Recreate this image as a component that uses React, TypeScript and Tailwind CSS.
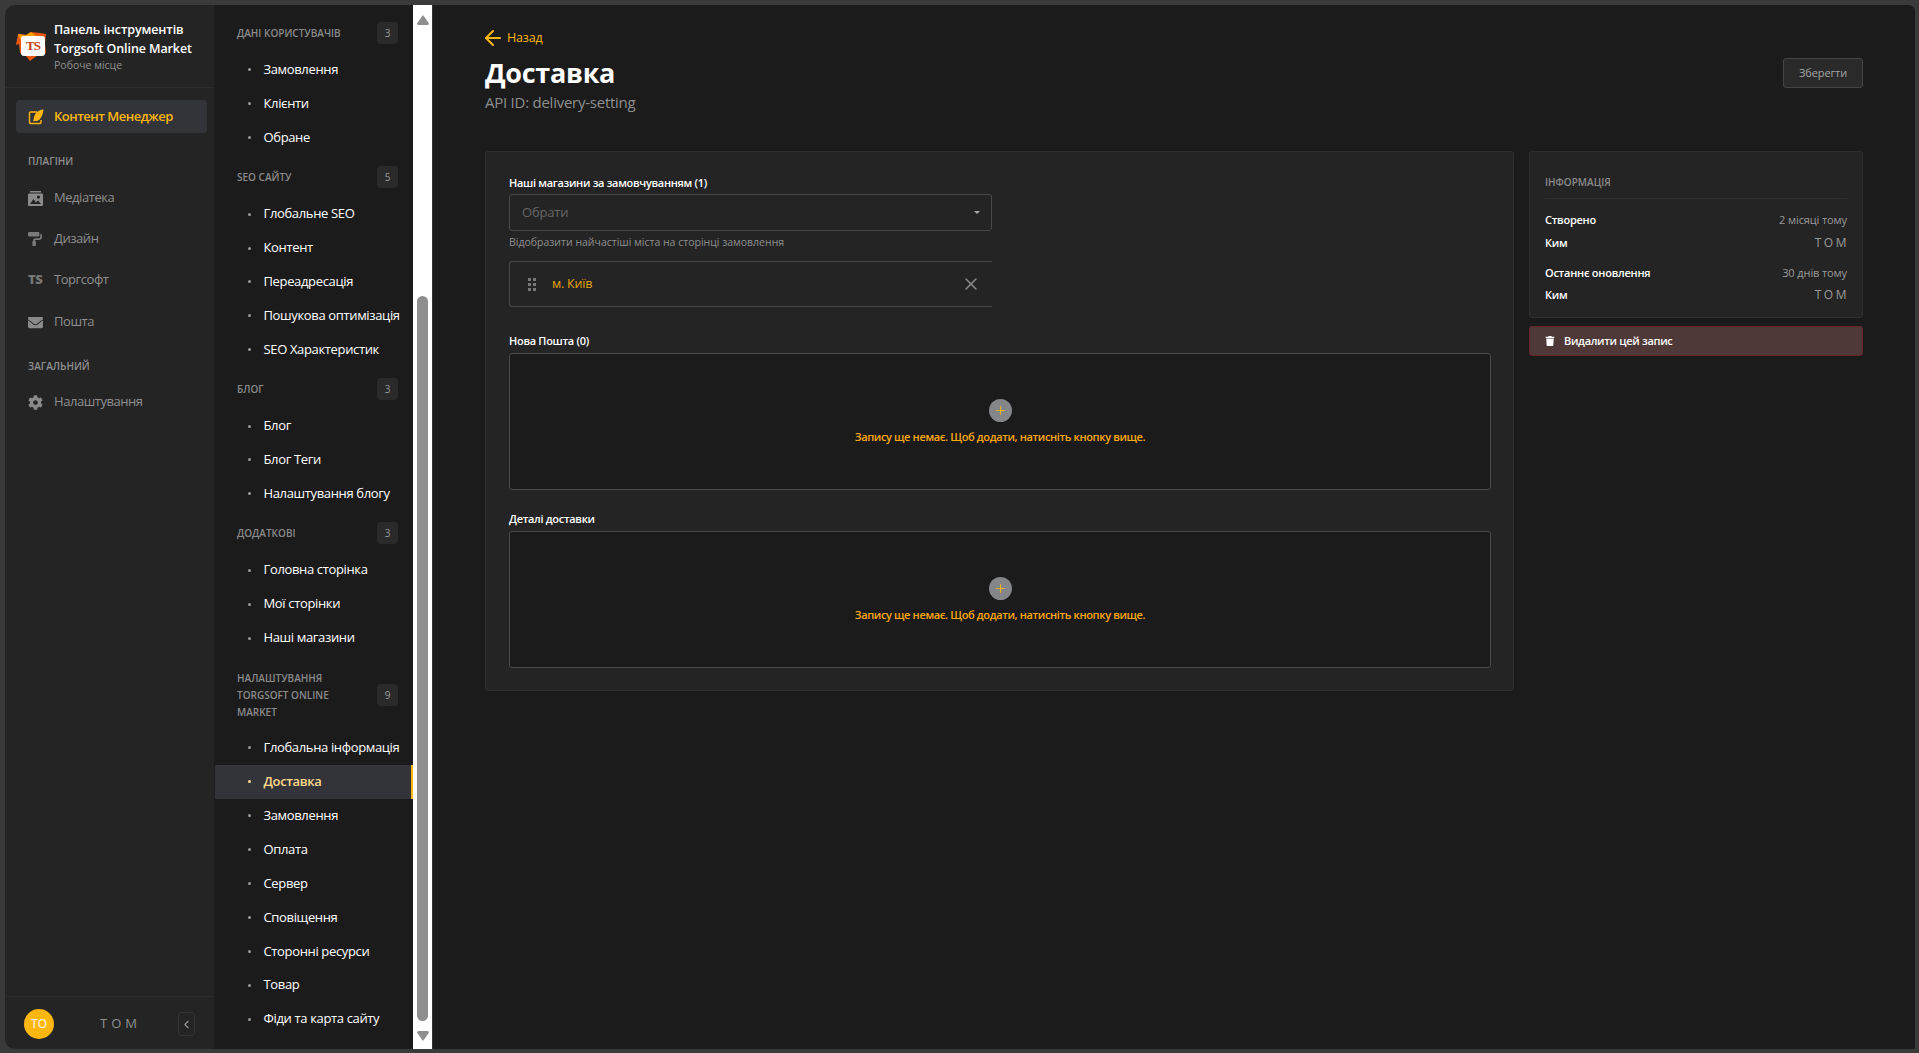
import { ArrowLeft, ChevronLeft, Plus, X } from "lucide-react";
import { FaCog, FaEnvelope, FaPaintRoller, FaTrash } from "react-icons/fa";

const font = "font-['Open_Sans',sans-serif]";

const groups = [
  { title: ["Дані користувачів"], count: 3, items: ["Замовлення", "Клієнти", "Обране"] },
  { title: ["SEO сайту"], count: 5, items: ["Глобальне SEO", "Контент", "Переадресація", "Пошукова оптимізація", "SEO Характеристик"] },
  { title: ["Блог"], count: 3, items: ["Блог", "Блог Теги", "Налаштування блогу"] },
  { title: ["Додаткові"], count: 3, items: ["Головна сторінка", "Мої сторінки", "Наші магазини"] },
  {
    title: ["Налаштування", "Torgsoft Online", "Market"],
    count: 9,
    items: ["Глобальна інформація", "Доставка", "Замовлення", "Оплата", "Сервер", "Сповіщення", "Сторонні ресурси", "Товар", "Фіди та карта сайту"],
  },
];

function Logo() {
  return (
    <div className="relative h-[30px] w-[31px] shrink-0">
      <svg viewBox="0 0 31 30" className="h-full w-full">
        <polygon points="2,3 10,4 15,1 24,2 30,3 29,12 30,22 22,24 14,30 10,25 4,22 3,13 0,14" fill="#e8590c" />
        <polygon points="2,3 10,4 15,1 20,5 6,12" fill="#f59f00" />
      </svg>
      <div className="absolute left-[5px] top-[5px] flex h-[20px] w-[24px] items-center justify-center rounded-[3px] bg-white font-['Liberation_Serif',serif] text-[13px] font-bold tracking-[-1px] text-[#c2410c]">
        TS
      </div>
    </div>
  );
}

function PenBox() {
  return (
    <svg viewBox="0 0 16 16" className="h-[16px] w-[16px]">
      <path d="M9 3H2.5A1 1 0 0 0 1.5 4v9.5a1 1 0 0 0 1 1H12a1 1 0 0 0 1-1V11" fill="none" stroke="#ffb70f" strokeWidth="1.4" />
      <path d="M15.5 .5C10 1 6.5 4 5.5 10.5L5 12.5l1-.5h3.5C13 10 15 6 15.5 .5Z" fill="#ffb70f" />
    </svg>
  );
}

function MediaIcon() {
  return (
    <svg viewBox="0 0 15 15" className="h-[15px] w-[15px]" fill="#8a8a8a">
      <path d="M2 0h11v1.5H2z" />
      <path fillRule="evenodd" d="M1 2.5h13a1 1 0 0 1 1 1V14a1 1 0 0 1-1 1H1a1 1 0 0 1-1-1V3.5a1 1 0 0 1 1-1Zm9.5 2a1.6 1.6 0 1 0 0 3.2 1.6 1.6 0 0 0 0-3.2ZM2 13h11l-3-3.5-2 2-2.5-3.5Z" />
    </svg>
  );
}

function NavRow({ icon, label, className }: { icon: React.ReactNode; label: string; className: string }) {
  return (
    <div className={`flex items-center ${className}`}>
      <span className="flex w-[26px] shrink-0 justify-start">{icon}</span>
      <span className="text-[13px] tracking-[-0.45px] text-[#8f8f8f]">{label}</span>
    </div>
  );
}

function Sidebar() {
  return (
    <aside className="flex w-[210px] shrink-0 flex-col rounded-l-[10px] border-r border-[#1d1d1d] bg-[#242424]">
      <div className="flex h-[83px] shrink-0 gap-[7px] border-b border-[#2d2d2d] pl-[11px] pt-[15px]">
        <div className="pt-[11px]">
          <Logo />
        </div>
        <div className="pt-[1px]">
          <div className="text-[12.5px] font-semibold leading-[18.5px] tracking-[-0.1px] text-white">Панель інструментів</div>
          <div className="text-[12.5px] font-semibold leading-[18.5px] tracking-[-0.1px] text-white">Torgsoft Online Market</div>
          <div className="text-[10.5px] leading-[15px] text-[#8f8f8f]">Робоче місце</div>
        </div>
      </div>
      <div className="ml-[11px] mr-[7px] mt-[12px] flex h-[33px] items-center rounded-[4px] bg-[#33343a] pl-[12px]">
        <span className="w-[26px]">
          <PenBox />
        </span>
        <span className="text-[13px] font-semibold tracking-[-0.5px] text-[#ffb70f]">Контент Менеджер</span>
      </div>
      <div className="ml-[23px] mt-[21px] text-[10px] font-semibold uppercase leading-[14px] text-[#8f8f8f]">Плагіни</div>
      <NavRow className="ml-[23px] mt-[18px] h-[24px]" icon={<MediaIcon />} label="Медіатека" />
      <NavRow className="ml-[23px] mt-[17px] h-[24px]" icon={<FaPaintRoller size={14} color="#7a7a7a" />} label="Дизайн" />
      <NavRow
        className="ml-[23px] mt-[17px] h-[24px]"
        icon={<span className="text-[13px] font-extrabold tracking-[-0.5px] text-[#777]">TS</span>}
        label="Торгсофт"
      />
      <NavRow className="ml-[23px] mt-[18px] h-[24px]" icon={<FaEnvelope size={15} color="#8a8a8a" />} label="Пошта" />
      <div className="ml-[23px] mt-[25px] text-[10px] font-semibold uppercase leading-[14px] text-[#8f8f8f]">Загальний</div>
      <NavRow className="ml-[23px] mt-[17px] h-[24px]" icon={<FaCog size={15} color="#8a8a8a" />} label="Налаштування" />
      <div className="mt-auto flex h-[53px] items-center border-t border-[#2d2d2d] pl-[19px] pt-[2px]">
        <div className="flex h-[30px] w-[30px] items-center justify-center rounded-full bg-[#ffb70f] text-[12px] text-white">TO</div>
        <div className="w-[124px] pl-[9px] text-center text-[13px] tracking-[4px] text-[#8f8f8f]">TOM</div>
        <div className="flex h-[24px] w-[17px] items-center justify-center rounded-[4px] border border-[#333]">
          <ChevronLeft size={13} color="#9a9a9a" />
        </div>
      </div>
    </aside>
  );
}

function SubNav() {
  return (
    <nav className="h-full w-[198px] shrink-0 overflow-hidden bg-[#1b1b1b] pt-[17px]">
      {groups.map((group) => (
        <div key={group.title[0]} className={group.title.length > 1 ? "mb-[11.5px] mt-[15px]" : "mb-[11.5px]"}>
          <div className="flex items-center justify-between pl-[22px] pr-[15px]">
            <div className="w-[120px] text-[10px] font-semibold uppercase leading-[17px] text-[#8a8a8a]">
              {group.title.map((line) => (
                <div key={line} className="whitespace-nowrap">{line}</div>
              ))}
            </div>
            <span className="flex h-[22px] w-[21px] items-center justify-center rounded-[4px] bg-[#2a2a2a] text-[10px] text-[#9a9a9a]">
              {group.count}
            </span>
          </div>
          <ul className={group.title.length > 1 ? "mt-[10px]" : "mt-[9px]"}>
            {group.items.map((item) => {
              const active = group.count === 9 && item === "Доставка";
              return (
                <li
                  key={item}
                  className={`flex h-[33.9px] items-center whitespace-nowrap pl-[33px] ${active ? "border-r-2 border-[#ffb70f] bg-[#33343a]" : ""}`}
                >
                  <span className={`mr-[12.5px] h-[3px] w-[3px] rounded-full ${active ? "bg-[#ffd98a]" : "bg-[#9a9a9a]"}`} />
                  <span className={`text-[13px] tracking-[-0.35px] ${active ? "font-semibold text-[#ffd98a]" : "text-white"}`}>{item}</span>
                </li>
              );
            })}
          </ul>
        </div>
      ))}
    </nav>
  );
}

function Scrollbar() {
  return (
    <div className="flex h-full w-[19px] shrink-0 flex-col items-center bg-white pt-[10px]">
      <svg viewBox="0 0 12 10" className="h-[10px] w-[12px]" fill="#8e8e8e">
        <path d="M6 0 12 8.5Q12 10 10.5 10H1.5Q0 10 0 8.5Z" />
      </svg>
      <div className="mt-[271px] h-[725px] w-[11px] rounded-full bg-[#8e8e8e]" />
      <svg viewBox="0 0 12 10" className="mt-[10px] h-[10px] w-[12px]" fill="#8e8e8e">
        <path d="M6 10 12 1.5Q12 0 10.5 0H1.5Q0 0 0 1.5Z" />
      </svg>
    </div>
  );
}

function EmptyBox() {
  return (
    <div className="flex h-[137px] flex-col items-center rounded-[3px] border border-[#4a4a4a] bg-[#1b1b1b] pt-[45px]">
      <div className="flex h-[23px] w-[23px] items-center justify-center rounded-full bg-[#85868a]">
        <Plus size={13} color="#ffb70f" />
      </div>
      <p className="mt-[6px] text-[11px] font-semibold leading-[18px] tracking-[-0.35px] text-[#ffa912]">
        Запису ще немає. Щоб додати, натисніть кнопку вище.
      </p>
    </div>
  );
}

function Label({ children }: { children: React.ReactNode }) {
  return <div className="text-[11px] font-semibold leading-[16px] tracking-[-0.3px] text-white">{children}</div>;
}

function InfoRow({ name, value, spaced }: { name: string; value: string; spaced?: boolean }) {
  return (
    <div className="flex h-[22.5px] items-center justify-between">
      <span className="text-[11px] font-semibold tracking-[-0.25px] text-white">{name}</span>
      <span className={spaced ? "-mr-[2px] text-[12px] tracking-[2.5px] text-[#9a9a9a]" : "text-[11px] tracking-[-0.1px] text-[#9a9a9a]"}>{value}</span>
    </div>
  );
}

function Main() {
  return (
    <main className="h-full min-w-0 flex-1 rounded-tr-[6px] bg-[#1b1b1b] px-[52px] pt-[25px]">
      <div className="-ml-[4px] flex h-[16px] items-center gap-[2px] text-[#ffb70f]">
        <ArrowLeft size={24} strokeWidth={2} className="shrink-0" />
        <span className="text-[12.5px] tracking-[-0.15px] text-[#ffb70f]">Назад</span>
      </div>
      <div className="flex justify-between">
        <div>
          <h1 className="mt-[8px] text-[27px] font-bold leading-[38px] tracking-[-0.3px] text-white">Доставка</h1>
          <p className="text-[15px] leading-[20px] tracking-[-0.25px] text-[#8f8f8f]">API ID: delivery-setting</p>
        </div>
        <button className="mt-[12px] h-[30px] w-[80px] rounded-[3px] border border-[#454545] bg-[#2a2a2a] text-[11px] tracking-[-0.1px] text-[#a5a5a5]">
          Зберегти
        </button>
      </div>
      <div className="mt-[39px] flex items-start gap-[15px]">
        <section className="h-[540px] w-[1029px] shrink-0 rounded-[3px] border border-[#2e2e2e] bg-[#242424] pl-[23px] pr-[22px] pt-[23px]">
          <Label>Наші магазини за замовчуванням (1)</Label>
          <div className="mt-[3px] flex h-[37px] w-[483px] items-center justify-between rounded-[3px] border border-[#484848] pl-[12px] pr-[11px]">
            <span className="text-[13px] tracking-[-0.2px] text-[#666]">Обрати</span>
            <span className="h-0 w-0 border-x-[3px] border-t-[3px] border-x-transparent border-t-[#aaa]" />
          </div>
          <p className="mt-[3px] text-[10.5px] leading-[16px] text-[#8f8f8f]">Відобразити найчастіші міста на сторінці замовлення</p>
          <div className="mt-[11px] flex h-[46px] w-[483px] items-center rounded-l-[3px] border-y border-l border-[#484848] pl-[18px]">
            <div className="grid w-[24px] grid-cols-[3px_3px] gap-[2px]">
              {[0, 1, 2, 3, 4, 5].map((d) => (
                <span key={d} className="h-[3px] w-[3px] bg-[#777]" />
              ))}
            </div>
            <span className="text-[12.5px] font-medium tracking-[-0.2px] text-[#e5a50a]">м. Київ</span>
            <X size={20} color="#8a8a8a" strokeWidth={1.75} className="ml-auto mr-[11px]" />
          </div>
          <div className="mt-[26px]">
            <Label>Нова Пошта (0)</Label>
            <div className="mt-[4px]">
              <EmptyBox />
            </div>
          </div>
          <div className="mt-[21px]">
            <Label>Деталі доставки</Label>
            <div className="mt-[4px]">
              <EmptyBox />
            </div>
          </div>
        </section>
        <div className="w-[334px] shrink-0">
          <section className="h-[167px] rounded-[3px] border border-[#2e2e2e] bg-[#242424] px-[15px] pt-[23px]">
            <div className="border-b border-[#2f2f2f] pb-[8px] text-[10px] font-semibold uppercase leading-[15px] text-[#8a8a8a]">Інформація</div>
            <div className="mt-[10px]">
              <InfoRow name="Створено" value="2 місяці тому" />
              <InfoRow name="Ким" value="TOM" spaced />
              <div className="h-[7.5px]" />
              <InfoRow name="Останнє оновлення" value="30 днів тому" />
              <InfoRow name="Ким" value="TOM" spaced />
            </div>
          </section>
          <button className="mt-[8px] flex h-[30px] w-full items-center rounded-[3px] border border-[#652525] bg-[#4f3838] pl-[15px]">
            <FaTrash size={10} color="#fff" />
            <span className="ml-[9px] text-[11px] font-semibold tracking-[-0.3px] text-white">Видалити цей запис</span>
          </button>
        </div>
      </div>
    </main>
  );
}

export default function App() {
  return (
    <div className={`h-[1053px] w-full overflow-hidden bg-[#3a3a3a] pb-[4px] pl-[5px] pr-[4px] pt-[5px] ${font}`}>
      <div className="flex h-full">
        <Sidebar />
        <SubNav />
        <Scrollbar />
        <div className="h-full w-px shrink-0 bg-[#333]" />
        <Main />
      </div>
    </div>
  );
}
